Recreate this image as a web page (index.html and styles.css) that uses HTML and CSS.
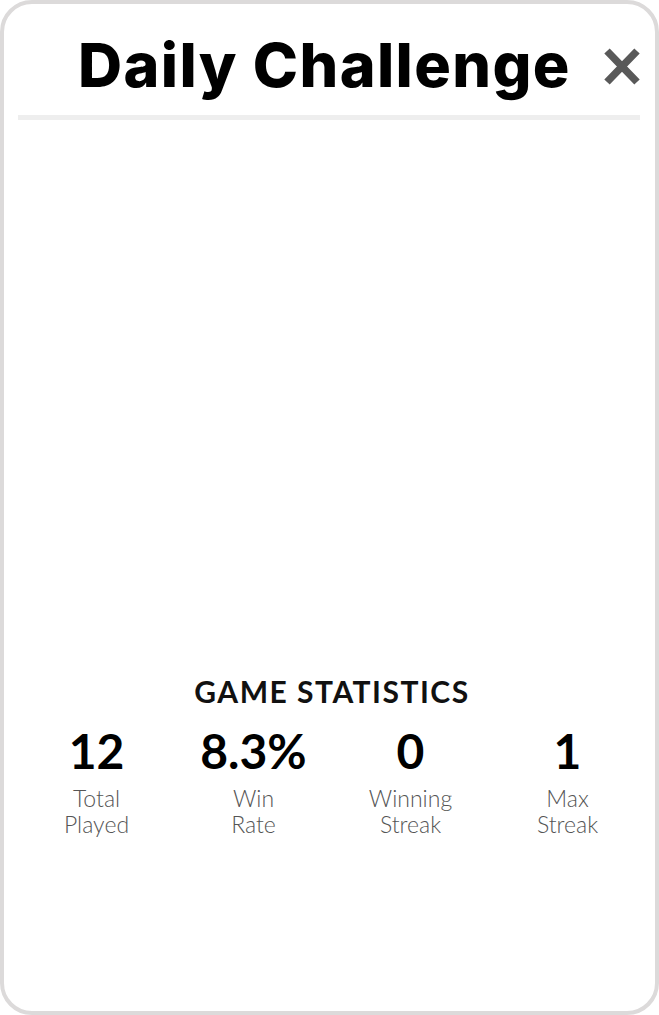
FILE: index.html
```html
<!DOCTYPE html>
<html lang="en">
<head>
<meta charset="utf-8">
<title>Daily Challenge</title>
<link rel="stylesheet" href="styles.css">
</head>
<body>
<div class="card">
  <header class="header">
    <h1 class="title">Daily Challenge</h1>
    <button class="close" aria-label="Close">
      <svg width="36" height="37" viewBox="0 0 36 37"><path d="M3 3 L33 34 M33 3 L3 34" stroke="#595959" stroke-width="7.5" fill="none"/></svg>
    </button>
  </header>
  <div class="divider"></div>
  <div class="board"></div>
  <section class="stats">
    <h2 class="stats-title">GAME STATISTICS</h2>
    <div class="stats-grid">
      <div class="stat"><div class="stat-value">12</div><div class="stat-label">Total<br>Played</div></div>
      <div class="stat"><div class="stat-value">8.3%</div><div class="stat-label">Win<br>Rate</div></div>
      <div class="stat"><div class="stat-value">0</div><div class="stat-label">Winning<br>Streak</div></div>
      <div class="stat"><div class="stat-value">1</div><div class="stat-label">Max<br>Streak</div></div>
    </div>
  </section>
</div>
</body>
</html>
```
FILE: styles.css
```css
html, body {
  margin: 0;
  padding: 0;
  background: #ffffff;
}
.card {
  box-sizing: border-box;
  width: 659px;
  height: 1015px;
  border: 4px solid #dcdada;
  border-radius: 32px;
  padding: 25px 15px 0 14px;
  background: #ffffff;
}
.header {
  display: flex;
  justify-content: space-between;
  align-items: flex-start;
  padding-left: 60px;
}
.title {
  margin: 0;
  font-family: Inter, "Liberation Sans", sans-serif;
  font-weight: 800;
  font-size: 61px;
  line-height: 72px;
  color: #000000;
  letter-spacing: 1.4px;
  white-space: nowrap;
}
.close {
  margin: 19px 0 0 0;
  padding: 0;
  border: 0;
  background: none;
  width: 36px;
  height: 37px;
  display: block;
}
.close svg { display: block; }
.divider {
  height: 5px;
  background: #eeeeee;
  margin-top: 14px;
}
.board {
  height: 553px;
}
.stats {
  width: 628px;
  display: flex;
  flex-direction: column;
  align-items: center;
}
.stats-title {
  margin: 0;
  font-family: Lato, "DejaVu Sans", sans-serif;
  font-weight: 700;
  font-size: 30px;
  line-height: 36px;
  color: #111111;
  letter-spacing: 1.5px;
}
.stats-grid {
  width: 100%;
  display: grid;
  grid-template-columns: repeat(4, 1fr);
  margin-top: 13px;
}
.stat {
  display: flex;
  flex-direction: column;
  align-items: center;
  text-align: center;
}
.stat-value {
  font-family: Lato, "DejaVu Sans", sans-serif;
  font-weight: 700;
  font-size: 48px;
  line-height: 58px;
  color: #000000;
}
.stat-label {
  margin-top: 5px;
  font-family: Lato, "DejaVu Sans", sans-serif;
  font-weight: 300;
  font-size: 23px;
  line-height: 26px;
  color: #555555;
}
```
